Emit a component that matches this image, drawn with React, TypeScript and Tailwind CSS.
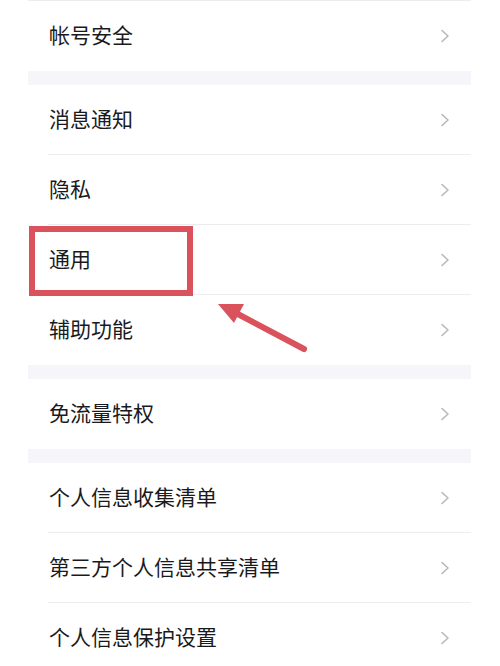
import React from "react";

const Chevron = () => (
  <svg width="10" height="16" viewBox="0 0 10 16" fill="none">
    <polyline points="2,2.5 8,8 2,13.5" stroke="#b8b8bc" strokeWidth="1.6" strokeLinecap="round" strokeLinejoin="round" />
  </svg>
);

const Row = ({ label, divider }: { label: string; divider?: boolean }) => (
  <div className="relative h-[70px] flex items-center justify-between pl-[21px] pr-[21px] bg-white">
    <span className="text-[21px] text-[#1a1a1c] leading-none mb-[3px]">{label}</span>
    <Chevron />
    {divider && <div className="absolute bottom-0 left-[20px] right-0 h-px bg-[#ededf0]" />}
  </div>
);

const Gap = () => <div className="h-[14px] bg-[#f6f6fa]" />;

export default function App() {
  return (
    <div
      className="relative w-[500px] h-[666px] overflow-hidden bg-white"
      style={{ fontFamily: '"Noto Sans CJK SC", "Noto Sans", sans-serif' }}
    >
      <div className="ml-[28px] w-[443px]">
        <div className="h-px bg-[#ededf0]" />
        <Row label="帐号安全" />
        <Gap />
        <Row label="消息通知" divider />
        <Row label="隐私" divider />
        <Row label="通用" divider />
        <Row label="辅助功能" />
        <Gap />
        <Row label="免流量特权" />
        <Gap />
        <Row label="个人信息收集清单" divider />
        <Row label="第三方个人信息共享清单" divider />
        <Row label="个人信息保护设置" />
      </div>
      <div className="absolute left-[29px] top-[226px] w-[164px] h-[70px] border-[6px] border-[#d9525c]" />
      <svg className="absolute left-0 top-0" width="500" height="666" viewBox="0 0 500 666">
        <line x1="304" y1="349" x2="234" y2="312" stroke="#d9525c" strokeWidth="6" strokeLinecap="round" />
        <polygon points="218,304 244,304 234,323" fill="#d9525c" />
      </svg>
    </div>
  );
}
